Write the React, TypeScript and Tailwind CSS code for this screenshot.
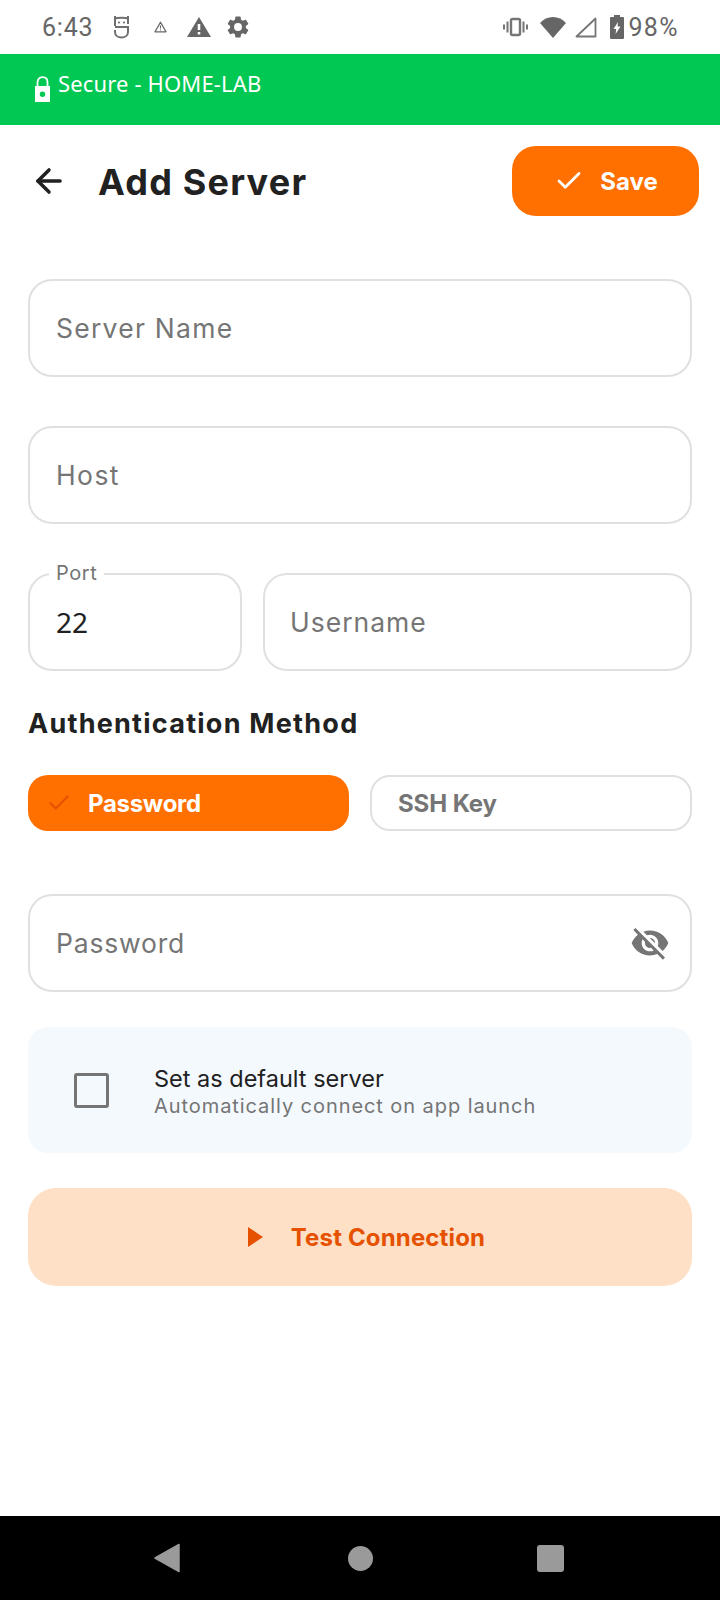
import { ArrowLeft, Check } from "lucide-react";

const sans = "font-['Inter',sans-serif]";

function StatusBar() {
  return (
    <div className="h-[54px] bg-white flex items-center justify-between pl-[42px] pr-[41px] text-[#666666]">
      <div className="flex items-center">
        <span className="font-['Roboto',sans-serif] text-[25px] leading-none tracking-[0.8px]">6:43</span>
        {/* notification icons */}
        <svg className="ml-[19px]" width="19" height="24" viewBox="0 0 19 24" fill="none" stroke="#707070" strokeWidth="2">
          <path d="M3 1 V11 M16 1 V9" />
          <path d="M3 3.5 C5 2.5 14 2.5 16 3.5" />
          <path d="M3 12 H16 V17 C16 20.5 13 22.5 9.5 22.5 C6 22.5 3 20.5 3 17 V15" />
          <circle cx="7" cy="7.5" r="1.1" fill="#707070" stroke="none" />
          <circle cx="12" cy="7.5" r="1.1" fill="#707070" stroke="none" />
        </svg>
        <svg className="ml-[23px]" width="13" height="12" viewBox="0 0 13 12" fill="none">
          <path d="M6.5 1.2 L12 10.8 H1 Z" stroke="#666666" strokeWidth="1.3" strokeLinejoin="round" />
          <path d="M6.5 4.5 V7.5 M6.5 8.4 V9.6" stroke="#666666" strokeWidth="1.1" />
        </svg>
        <svg className="ml-[20px]" width="24" height="20" viewBox="0 0 24 20">
          <path fillRule="evenodd" d="M12 0 L24 20 H0 Z M10.7 7 H13.3 V13 H10.7 Z M10.7 15 H13.3 V17.5 H10.7 Z" fill="#666666" />
        </svg>
        <svg className="ml-[16px]" width="22" height="22" viewBox="2 2 20 20">
          <path
            fill="#666666"
            d="M19.14 12.94c.04-.3.06-.61.06-.94s-.02-.64-.07-.94l2.03-1.58a.49.49 0 0 0 .12-.61l-1.92-3.32a.49.49 0 0 0-.59-.22l-2.39.96a7.03 7.03 0 0 0-1.62-.94l-.36-2.54a.48.48 0 0 0-.48-.41h-3.84a.48.48 0 0 0-.47.41l-.36 2.54c-.59.24-1.13.57-1.62.94l-2.39-.96a.49.49 0 0 0-.59.22L2.74 8.87a.48.48 0 0 0 .12.61l2.03 1.58c-.05.3-.09.63-.09.94s.02.64.07.94l-2.03 1.58a.49.49 0 0 0-.12.61l1.92 3.32c.12.22.37.29.59.22l2.39-.96c.5.38 1.03.7 1.62.94l.36 2.54c.05.24.24.41.48.41h3.84c.24 0 .44-.17.47-.41l.36-2.54c.59-.24 1.13-.56 1.62-.94l2.39.96c.22.08.47 0 .59-.22l1.92-3.32a.47.47 0 0 0-.12-.61l-2.01-1.58zM12 15.6a3.6 3.6 0 1 1 0-7.2 3.6 3.6 0 0 1 0 7.2z"
          />
        </svg>
      </div>
      <div className="flex items-center">
        <svg width="25" height="20" viewBox="0 0 25 20" fill="none">
          <rect x="8" y="2" width="9" height="16" rx="1.5" stroke="#757575" strokeWidth="2.4" />
          <path d="M4.5 4.5 V15.5 M20.5 4.5 V15.5" stroke="#757575" strokeWidth="2" />
          <path d="M1 7.5 V12.5 M24 7.5 V12.5" stroke="#757575" strokeWidth="2" />
        </svg>
        <svg className="ml-[12px]" width="26" height="21" viewBox="0 0 26 21">
          <path d="M13 21 L0 6 C3.5 2.2 8 0 13 0 C18 0 22.5 2.2 26 6 Z" fill="#666666" />
        </svg>
        <svg className="ml-[8px]" width="23" height="22" viewBox="0 0 23 22" fill="none">
          <path d="M21.5 2.5 V20.5 H2.5 Z" stroke="#757575" strokeWidth="1.8" strokeLinejoin="round" />
        </svg>
        <svg className="ml-[13px]" width="14" height="24" viewBox="0 0 14 24">
          <path fillRule="evenodd" d="M4 0 H10 V2 H13 A1 1 0 0 1 14 3 V23 A1 1 0 0 1 13 24 H1 A1 1 0 0 1 0 23 V3 A1 1 0 0 1 1 2 H4 Z M8 7 L3.5 14 H6.2 L5.6 19 L10.5 11.6 H7.6 Z" fill="#666666" />
        </svg>
        <span className="ml-[4px] font-['Roboto',sans-serif] text-[25px] leading-none tracking-[1.4px]">98%</span>
      </div>
    </div>
  );
}

function SecureBanner() {
  return (
    <div className="h-[71px] bg-[#00c853] pl-[34px] pt-[16px] flex items-start">
      <svg className="mt-[6px]" width="17" height="27" viewBox="0 0 17 27">
        <path d="M3.5 11 V6.5 C3.5 3.2 5.5 1.2 8.5 1.2 C11.5 1.2 13.5 3.2 13.5 6.5 V11" fill="none" stroke="#fff" strokeWidth="1.8" />
        <path fillRule="evenodd" d="M1 10 H16 V26 H1 Z M8.5 15.5 A2.7 2.7 0 1 0 8.5 21 A2.7 2.7 0 1 0 8.5 15.5 Z" fill="#fff" />
      </svg>
      <span className="ml-[7px] font-['Noto_Sans',sans-serif] text-[22px] leading-[26px] tracking-[0.15px] text-white">Secure - HOME-LAB</span>
    </div>
  );
}

function Field({ label, className = "", tracking = "tracking-[0.9px]" }: { label: string; className?: string; tracking?: string }) {
  return (
    <div className={`h-[98px] rounded-[24px] border-2 border-[#e0e0e0] bg-white flex items-center pl-[26px] ${className}`}>
      <span className={`${sans} pt-[2px] text-[26.5px] text-[#757575] ${tracking}`}>{label}</span>
    </div>
  );
}

export default function App() {
  return (
    <div className="w-[720px] h-[1600px] bg-white flex flex-col overflow-hidden">
      <StatusBar />
      <SecureBanner />

      <div className="flex-1 flex flex-col">
        {/* header */}
        <div className="flex items-center pl-[28px] pr-[21px] pt-[21px]">
          <ArrowLeft size={38} strokeWidth={2.2} color="#212121" className="ml-[2px]" />
          <h1 className={`${sans} ml-[30px] pt-[2px] text-[36px] leading-[68px] font-bold tracking-[1.2px] text-[#212121]`}>Add Server</h1>
          <div className="ml-auto w-[187px] h-[70px] rounded-[24px] bg-[#ff7000] flex items-center justify-center">
            <Check size={30} strokeWidth={2.2} color="#fff" className="ml-[1px]" />
            <span className={`${sans} ml-[16px] pt-[2px] text-[24px] font-bold text-white`}>Save</span>
          </div>
        </div>

        <div className="px-[28px] mt-[63px] flex flex-col">
          <Field label="Server Name" tracking="tracking-[1.25px]" />
          <Field label="Host" className="mt-[49px]" tracking="tracking-[1.4px]" />

          <div className="mt-[49px] flex gap-[21px]">
            <div className="relative w-[214px] h-[98px] rounded-[24px] border-2 border-[#e0e0e0] flex items-center pl-[26px]">
              <span className="absolute -top-[14px] left-[19px] bg-white px-[7px] font-['Inter',sans-serif] text-[20px] leading-[24px] tracking-[0.6px] text-[#757575]">Port</span>
              <span className="font-['Noto_Sans',sans-serif] text-[28px] text-[#212121]">22</span>
            </div>
            <Field label="Username" className="flex-1 !pl-[25px]" tracking="tracking-[1px]" />
          </div>

          <h2 className={`${sans} mt-[34px] pt-[1px] text-[27px] leading-[36px] font-bold tracking-[1.25px] text-[#212121]`}>Authentication Method</h2>

          <div className="mt-[33px] grid grid-cols-[321px_1fr] gap-[21px]">
            <div className="h-[56px] rounded-[20px] bg-[#ff7000] flex items-center pl-[18px]">
              <Check size={26} strokeWidth={2} color="#e65100" />
              <span className={`${sans} ml-[16px] pt-[2px] text-[24px] font-bold tracking-[-0.3px] text-white`}>Password</span>
            </div>
            <div className="h-[56px] rounded-[20px] border-2 border-[#e0e0e0] flex items-center pl-[26px]">
              <span className={`${sans} pt-[2px] text-[24px] font-bold tracking-[-0.1px] text-[#757575]`}>SSH Key</span>
            </div>
          </div>

          <div className="mt-[63px] h-[98px] rounded-[24px] border-2 border-[#e0e0e0] flex items-center justify-between pl-[26px] pr-[20px]">
            <span className={`${sans} pt-[2px] text-[26.5px] tracking-[0.8px] text-[#757575]`}>Password</span>
            <svg width="40" height="40" viewBox="0 0 24 24">
              <path
                fill="#757575"
                d="M12 7c2.76 0 5 2.24 5 5 0 .65-.13 1.26-.36 1.83l2.92 2.92c1.51-1.26 2.7-2.89 3.43-4.75-1.73-4.39-6-7.5-11-7.5-1.4 0-2.74.25-3.98.7l2.16 2.16C10.74 7.13 11.35 7 12 7zM2 4.27l2.28 2.28.46.46C3.08 8.3 1.78 10.02 1 12c1.73 4.39 6 7.5 11 7.5 1.55 0 3.03-.3 4.38-.84l.42.42L19.73 22 21 20.73 3.27 3 2 4.27zM7.53 9.8l1.55 1.55c-.05.21-.08.43-.08.65 0 1.66 1.34 3 3 3 .22 0 .44-.03.65-.08l1.55 1.55c-.67.33-1.41.53-2.2.53-2.76 0-5-2.24-5-5 0-.79.2-1.53.53-2.2zm4.31-.78l3.15 3.15.02-.16c0-1.66-1.34-3-3-3l-.17.01z"
              />
            </svg>
          </div>

          {/* default server toggle */}
          <div className="mt-[35px] h-[126px] rounded-[20px] bg-[#f4f9fe] flex items-center pl-[46px]">
            <div className="w-[35px] h-[35px] rounded-[3px] border-[3px] border-[#757575]" />
            <div className="ml-[45px] pt-[4px] flex flex-col">
              <span className={`${sans} text-[23.5px] leading-[28px] text-[#212121]`}>Set as default server</span>
              <span className={`${sans} text-[20px] leading-[26px] tracking-[0.93px] text-[#757575]`}>Automatically connect on app launch</span>
            </div>
          </div>

          <div className="mt-[35px] h-[98px] rounded-[28px] bg-[#fde0c5] flex items-center justify-center pl-[13px]">
            <svg width="15" height="20" viewBox="0 0 15 20">
              <path d="M0 0 L15 10 L0 20 Z" fill="#e65100" />
            </svg>
            <span className={`${sans} ml-[28px] pt-[2px] text-[24px] font-bold tracking-[0.15px] text-[#e65100]`}>Test Connection</span>
          </div>
        </div>
      </div>

      {/* android nav bar */}
      <div className="h-[84px] bg-black relative">
        <svg className="absolute left-[154px] top-[27px]" width="26" height="30" viewBox="0 0 26 30">
          <path d="M25 1.5 V28.5 L1 15 Z" fill="#9a9a9a" stroke="#9a9a9a" strokeWidth="1.5" strokeLinejoin="round" />
        </svg>
        <div className="absolute left-[348px] top-[30px] w-[25px] h-[25px] rounded-full bg-[#9a9a9a]" />
        <div className="absolute left-[537px] top-[29px] w-[27px] h-[27px] rounded-[3px] bg-[#9a9a9a]" />
      </div>
    </div>
  );
}
